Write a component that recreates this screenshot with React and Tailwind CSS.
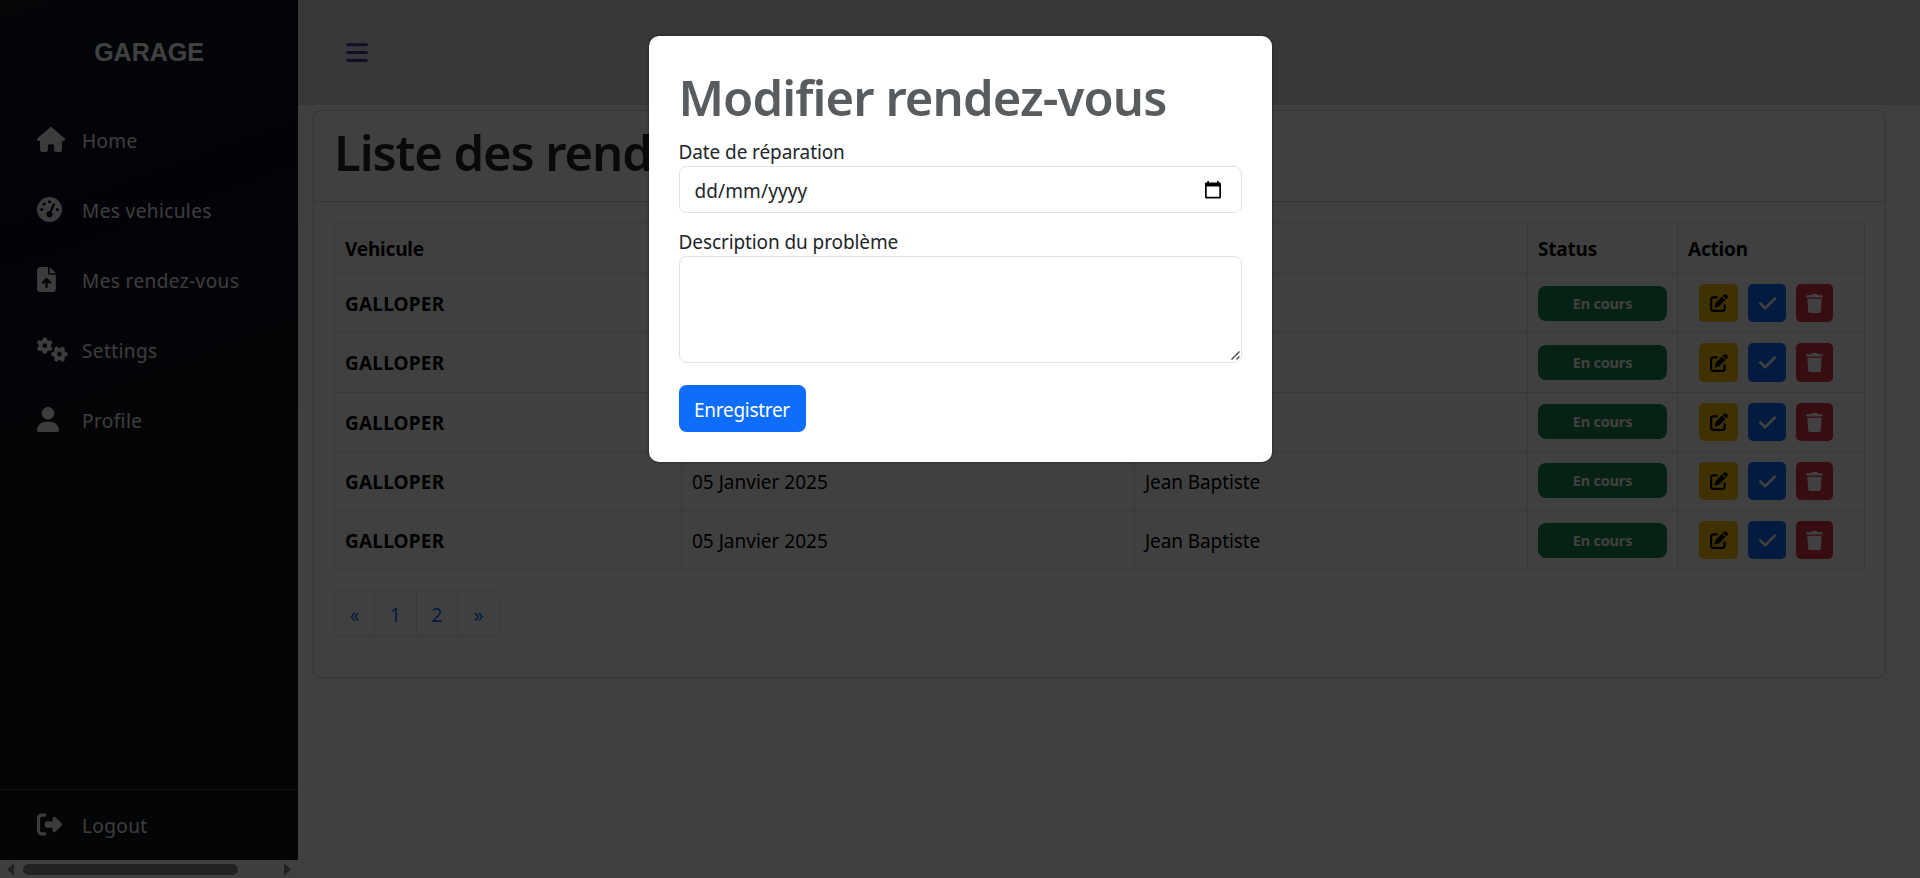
import { FaHouse, FaGaugeHigh, FaFileArrowUp, FaGears, FaUser, FaRightFromBracket, FaBars, FaPenToSquare, FaCheck, FaTrash } from "react-icons/fa6";

const NAV = [
  { label: "Home", Icon: FaHouse, size: "w-[28px]" },
  { label: "Mes vehicules", Icon: FaGaugeHigh, size: "w-[25px]" },
  { label: "Mes rendez-vous", Icon: FaFileArrowUp, size: "w-[19px]" },
  { label: "Settings", Icon: FaGears, size: "w-[31px]" },
  { label: "Profile", Icon: FaUser, size: "w-[22px]" },
];

const ROWS = [
  { h: "h-[59px]", badge: "mt-[2px]", btn: "h-[38px]" },
  { h: "h-[60px]", badge: "mt-[2px]", btn: "h-[39px]" },
  { h: "h-[59px]", badge: "mt-[1px]", btn: "h-[38px]" },
  { h: "h-[59px]", badge: "mt-[1px]", btn: "h-[38px]", date: "05 Janvier 2025", client: "Jean Baptiste" },
  { h: "h-[59px]", badge: "mt-[2px]", btn: "h-[38px]", date: "05 Janvier 2025", client: "Jean Baptiste" },
];

const COLS = "grid grid-cols-[347px_453px_393px_150px_187px]";
const CELL = "border-r border-[#dee2e6] px-[10px]";

function NavLink({ label, Icon, size }) {
  return (
    <a className="flex h-[70px] items-center pl-[37px] text-[#f0f0f0]">
      <span className="flex w-[45px] shrink-0"><Icon className={`h-[25px] shrink-0 -translate-y-px ${size}`} /></span>
      <span className="pt-[2px] text-[19px] leading-[30px] tracking-[0.4px]">{label}</span>
    </a>
  );
}

function Sidebar() {
  return (
    <aside className="flex h-[878px] w-[298px] shrink-0 flex-col">
      <div className="flex h-[860px] flex-col bg-[linear-gradient(160deg,#10181f_0%,#0e0a20_25%,#14151a_60%,#10161c_100%)]">
        <div className="flex h-[105px] items-center justify-center font-['Liberation_Sans',Arial,sans-serif] text-[25px] font-bold text-white">GARAGE</div>
        <nav className="flex grow flex-col">
          {NAV.map((n) => <NavLink key={n.label} {...n} />)}
        </nav>
        <div className="border-t border-[#4b4e52]">
          <NavLink label="Logout" Icon={FaRightFromBracket} size="w-[25px]" />
        </div>
      </div>
      <div className="flex h-[18px] items-center bg-[#fafafa] pl-[7px]">
        <svg className="h-[13px] w-[7px]" viewBox="0 0 7 13"><path d="M7 0v13L0 6.5z" fill="#888" /></svg>
        <div className="ml-[9px] h-[11px] w-[215px] rounded-full bg-[#888]" />
        <svg className="ml-[46px] h-[13px] w-[7px]" viewBox="0 0 7 13"><path d="M0 0v13l7-6.5z" fill="#888" /></svg>
      </div>
    </aside>
  );
}

function Row({ row }) {
  return (
    <div className={`${COLS} ${row.h} border-b border-[#dee2e6]`}>
      <div className={`${CELL} pt-[15px] font-bold tracking-[0.2px]`}>GALLOPER</div>
      <div className={`${CELL} pt-[15px]`}>{row.date}</div>
      <div className={`${CELL} pt-[15px] tracking-[-0.1px]`}>{row.client}</div>
      <div className={`${CELL} pt-[10px]`}>
        <div className={`${row.badge} flex h-[35px] w-[129px] items-center justify-center rounded-[8px] bg-[#198754] pb-px text-[14.5px] font-bold tracking-[-0.2px] text-white`}>En cours</div>
      </div>
      <div className="flex border-r border-[#dee2e6] pt-[10px] pl-[21px]">
        <span className={`flex w-[39px] items-center justify-center rounded-[5px] bg-[#ffc107] text-black ${row.btn}`}><FaPenToSquare className="size-[18px]" /></span>
        <span className={`ml-[10px] flex w-[38px] items-center justify-center rounded-[5px] bg-[#0d6efd] text-white ${row.btn}`}><FaCheck className="size-[19px]" stroke="currentColor" strokeWidth="14" /></span>
        <span className={`ml-[10px] flex w-[37px] items-center justify-center rounded-[5px] bg-[#dc3545] text-white ${row.btn}`}><FaTrash className="size-[19px]" /></span>
      </div>
    </div>
  );
}

function Appointments() {
  return (
    <section className="mt-[5px] ml-[15px] h-[568px] w-[1573px] rounded-[8px] border border-[#d2d2d2] text-black">
      <div className="h-[91px] border-b border-[#d2d2d2] pl-[20px]">
        <h1 className="pt-[11px] text-[49px] leading-[60px] font-semibold tracking-[-1.1px] whitespace-nowrap text-[#212529]">Liste des rend</h1>
      </div>
      <div className="mt-[20px] ml-[20px] w-[1531px] border-t border-l border-[#dee2e6] text-[19px] leading-[30px]">
        <div className={`${COLS} h-[51px] border-b border-[#dee2e6] font-bold tracking-[-0.2px]`}>
          {["Vehicule", "", "", "Status", "Action"].map((t, i) => (
            <div key={i} className={`${CELL} pt-[11px]`}>{t}</div>
          ))}
        </div>
        {ROWS.map((r, i) => <Row key={i} row={r} />)}
      </div>
      <div className="mt-[20px] ml-[20px] grid h-[47px] w-[166px] grid-cols-[40px_42px_41px_41px] rounded-[8px] border border-[#dee2e6] text-center text-[19px] leading-[48px] text-[#0d6efd]">
        <span className="h-[45px] border-r border-[#dee2e6]">«</span>
        <span className="h-[45px] border-r border-[#dee2e6]">1</span>
        <span className="h-[45px] border-r border-[#dee2e6]">2</span>
        <span>»</span>
      </div>
    </section>
  );
}

function Modal() {
  return (
    <div className="mt-[36px] h-[426px] w-[623px] rounded-[10px] bg-white px-[30px] pt-[30px] text-[19px] leading-[30px] text-[#212529] shadow-[0_0_3px_rgba(0,0,0,0.5)]">
      <h1 className="h-[71px] pt-[1px] text-[49px] leading-[60px] font-semibold tracking-[-0.9px] whitespace-nowrap text-[#595c5f]">Modifier rendez-vous</h1>
      <label className="block h-[29px] tracking-[-0.1px]">Date de réparation</label>
      <div className="flex h-[47px] items-center justify-between rounded-[7.5px] border border-[#dee2e6] pr-[19px] pl-[15px]">
        <span className="pt-[2px] tracking-[0.1px]">dd/mm/yyyy</span>
        <svg className="h-[18px] w-[18px]" viewBox="0 0 18 18"><path d="M3.3 0h1.7v1.5h8V0h1.7v1.5h1A1.3 1.3 0 0 1 17 2.8v13.4a1.3 1.3 0 0 1-1.3 1.3H2.3A1.3 1.3 0 0 1 1 16.2V2.8A1.3 1.3 0 0 1 2.3 1.5h1zM2.700 5.600v10.200h12.600V5.600z" fill="#000" /></svg>
      </div>
      <label className="mt-[14px] block h-[29px] tracking-[-0.1px]">Description du problème</label>
      <div className="flex h-[107px] items-end justify-end rounded-[7.5px] border border-[#dee2e6] pr-px pb-[2px]">
        <svg className="h-[9px] w-[9px]" viewBox="0 0 9 9" stroke="#555" strokeWidth="1.5"><path d="M0.500 8.500l8-8M5.500 8.500l3-3" /></svg>
      </div>
      <button className="mt-[22px] block h-[47px] w-[127px] rounded-[7.5px] bg-[#0d6efd] pt-[2px] text-center tracking-[-0.3px] text-white">Enregistrer</button>
    </div>
  );
}

export default function App() {
  return (
    <div className="relative h-[878px] w-[1920px] overflow-hidden bg-white font-['Noto_Sans',sans-serif]">
      <div className="flex">
        <Sidebar />
        <main className="w-[1622px]">
          <header className="flex h-[105px] items-center bg-[#e0e0e0] pl-[48px]">
            <FaBars className="h-[25px] w-[22px] text-[#4a3fa8]" />
          </header>
          <Appointments />
        </main>
      </div>
      <div className="absolute inset-0 flex justify-center bg-black/75">
        <Modal />
      </div>
    </div>
  );
}
